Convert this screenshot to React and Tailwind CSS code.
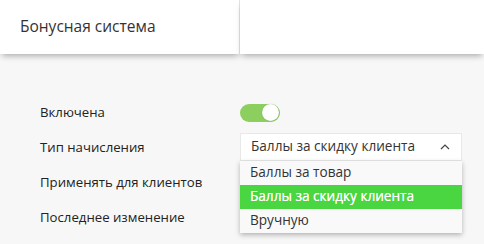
import React from 'react';

const rows = [
    { id: 'enabled', label: 'Включена' },
    { id: 'type', label: 'Тип начисления' },
    { id: 'clients', label: 'Применять для клиентов' },
    { id: 'changed', label: 'Последнее изменение' },
];

const options = ['Баллы за товар', 'Баллы за скидку клиента', 'Вручную'];

function Toggle() {
    return (
        <div className="w-[40px] h-[18px] rounded-full bg-[#8dcf5e] flex items-center justify-end pr-[1px]">
            <span className="w-[17px] h-[17px] rounded-full bg-white shadow-[0_0_1px_rgba(0,0,0,0.3)]" />
        </div>
    );
}

function Select() {
    const selected = options[1];
    return (
        <div className="relative w-[222px] -mt-[2px]">
            <div className="h-[28px] bg-white border border-[#e8e8e8] flex items-center justify-between pl-[10px] pr-[11px] text-[13.6px] text-[#333]">
                <span>{selected}</span>
                <svg width="10" height="6" viewBox="0 0 10 6" fill="none">
                    <polyline points="1,5 5,1 9,5" stroke="#444" strokeWidth="1.2" />
                </svg>
            </div>
            {/* Open list */}
            <ul className="absolute left-0 top-[28px] w-full bg-[#f9f9f9] shadow-[0_2px_5px_rgba(0,0,0,0.28)] z-10 text-[13.6px] text-[#333]">
                {options.map((o) => (
                    <li
                        key={o}
                        className={`h-[24px] flex items-center pl-[10px] ${o === selected ? 'bg-[#4ad640] text-white [text-shadow:0_0_0.4px_#fff]' : ''}`}
                    >
                        {o}
                    </li>
                ))}
            </ul>
        </div>
    );
}

export default function App() {
    return (
        <div className="w-[484px] h-[244px] overflow-hidden bg-[#f7f7f7] font-['Open_Sans',sans-serif]">
            {/* Header */}
            <div className="flex h-[54px]">
                <div className="w-[240px] bg-white border-r border-[#e4e4e4] shadow-[0_4px_6px_-2px_rgba(0,0,0,0.3)] flex items-center pl-[20px] text-[15.5px] text-[#333]">
                    Бонусная система
                </div>
                <div className="flex-1 bg-white shadow-[0_4px_6px_-2px_rgba(0,0,0,0.3)]" />
            </div>

            {/* Settings */}
            <div className="pt-[41px] pl-[40px]">
                {rows.map((r) => (
                    <div key={r.id} className="flex items-center h-[35px]">
                        <div className="w-[200px] text-[13.2px] text-[#222]">{r.label}</div>
                        {r.id === 'enabled' && <Toggle />}
                        {r.id === 'type' && <Select />}
                    </div>
                ))}
            </div>
        </div>
    );
}
